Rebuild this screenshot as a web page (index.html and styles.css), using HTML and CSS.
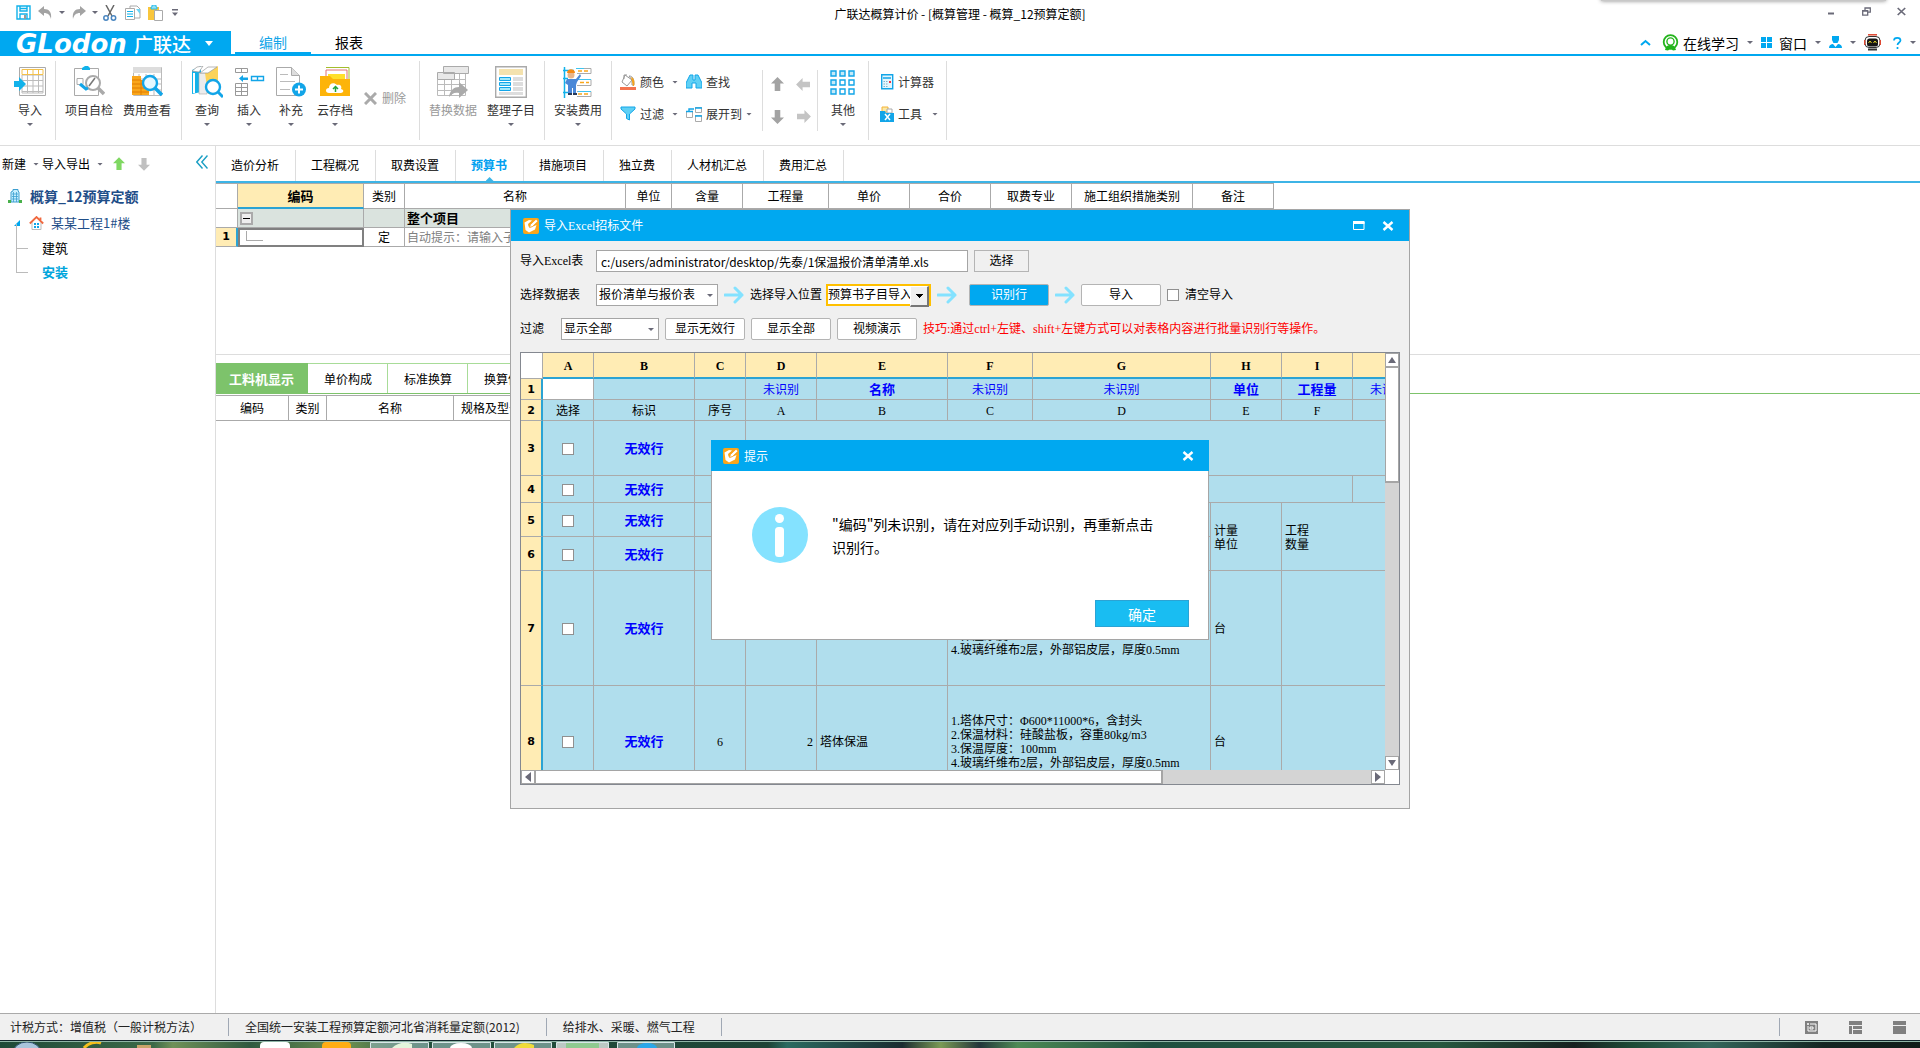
FILE: index.html
```html
<!DOCTYPE html>
<html lang="zh-CN">
<head>
<meta charset="utf-8">
<title>广联达概算计价 - [概算管理 - 概算_12预算定额]</title>
<link rel="stylesheet" href="styles.css">
</head>
<body>
<svg class="defs" aria-hidden="true">
  <symbol id="app" viewBox="0 0 16 16"><rect width="16" height="16" rx="2" fill="#faa61a"/><path d="M1.500 4.500L6 2l3 .5L5 6l.5 2.500 2 1L13.500 7 12 11.500 6 14.500 2.500 12z" fill="#fff"/><path d="M6.500 9.500l1-3L13 1.200 15 3.200 9.500 8.500z" fill="#fff" stroke="#f59a13" stroke-width=".7"/></symbol>
  <symbol id="step" viewBox="0 0 20 18"><path d="M1 9h17M11 2l7 7-7 7" fill="none" stroke="#84e2ff" stroke-width="3" stroke-linecap="round" stroke-linejoin="round"/></symbol>
  <symbol id="close" viewBox="0 0 12 10"><path d="M1.500 1l9 8M10.500 1l-9 8" stroke="#fff" stroke-width="2.400"/></symbol>
  <symbol id="arrow" viewBox="0 0 14 16"><path d="M7 0l7 7h-4v8H4V7H0z" fill="currentColor"/></symbol>
</svg>

<header class="titlebar">
  <div class="quick">
    <button aria-label="保存"><svg width="15" height="15" viewBox="0 0 15 15"><path d="M1 1h13v13H1zM4 1v5h7V1M4 14V9h7v5M4 3.500h7" fill="none" stroke="#12b2ea" stroke-width="1.400"/><path d="M8 10h2v4H8z" fill="#999"/></svg></button>
    <button class="q-undo" aria-label="撤销"><svg width="14" height="14" viewBox="0 0 14 14"><path d="M0 5l6-5v3c5 0 8 3 7 10-1-4-3-6-7-6v3z" fill="#a3a3a3"/></svg></button>
    <i class="dd"></i>
    <button class="q-redo" aria-label="恢复"><svg width="14" height="14" viewBox="0 0 14 14"><path d="M14 5L8 0v3C3 3 0 6 1 13c1-4 3-6 7-6v3z" fill="#a3a3a3"/></svg></button>
    <i class="dd"></i>
    <button class="q-cut" aria-label="剪切"><svg width="14" height="16" viewBox="0 0 14 16"><path d="M3 0l6 11M11 0L5 11" stroke="#666" stroke-width="1.500"/><circle cx="3" cy="13" r="2.200" fill="none" stroke="#4a86c0" stroke-width="1.500"/><circle cx="10.500" cy="13" r="2.200" fill="none" stroke="#4a86c0" stroke-width="1.500"/></svg></button>
    <button class="q-copy" aria-label="复制"><svg width="16" height="16" viewBox="0 0 16 16"><path d="M5 1h7l3 3v9H5z" fill="#fff" stroke="#aaa"/><path d="M11 4h4v5z" fill="#6fd3f3"/><path d="M.5 3.500h9v11h-9z" fill="#fff" stroke="#aaa"/><path d="M2 6.500h6M2 9h6M2 11.500h6" stroke="#12b2ea"/></svg></button>
    <button class="q-paste" aria-label="粘贴"><svg width="16" height="16" viewBox="0 0 16 16"><path d="M0 2h11v13H0z" fill="#f9c63c"/><path d="M3 4V2h1V0h4v2h1v2z" fill="#8fe0f5" stroke="#12b2ea" stroke-width=".8"/><path d="M6.500 5.500h8v10h-8z" fill="#fff" stroke="#aaa"/></svg></button>
    <i class="dd more"></i>
  </div>
  <h1>广联达概算计价 - [概算管理 - 概算_12预算定额]</h1>
  <div class="winbtns">
    <button aria-label="最小化"><svg width="9" height="9" viewBox="0 0 9 9"><path d="M1 6.500h6" stroke="#6a6a78" stroke-width="2"/></svg></button>
    <button aria-label="还原"><svg width="9" height="9" viewBox="0 0 9 9"><path d="M3 3V.8h5.300v4.400H6M.7 3.700h5v4.500h-5zM.5 4h5.500M3 1.200h5" fill="none" stroke="#6a6a78" stroke-width="1.300"/></svg></button>
    <button aria-label="关闭"><svg width="9" height="9" viewBox="0 0 9 9"><path d="M.7 1l7.500 7M8.200 1L.7 8" stroke="#6a6a78" stroke-width="1.700"/></svg></button>
  </div>
  <div class="dock"></div>
</header>

<nav class="menubar">
  <button class="brand"><span class="brand-en">GLodon</span><span class="brand-cn">广联达</span><i class="dd"></i></button>
  <a class="menu on" href="#edit">编制</a>
  <a class="menu" href="#report">报表</a>
  <div class="account">
    <svg width="11" height="7" viewBox="0 0 11 7"><path d="M1 6l4.500-4L10 6" fill="none" stroke="#00a8f0" stroke-width="2"/></svg>
    <button class="acct"><svg width="17" height="17" viewBox="0 0 17 17"><circle cx="8.500" cy="8" r="6.800" fill="none" stroke="#23b41b" stroke-width="1.800"/><circle cx="8.500" cy="7.500" r="3.600" fill="none" stroke="#23b41b" stroke-width="1.400"/><path d="M3 16c1-4 3-5 5.500-5s4.500 1 5.500 5l-3 .5-2.500-2-2.500 2z" fill="#23b41b"/></svg>在线学习</button><i class="dd"></i>
    <button class="acct acct-win"><svg width="11" height="11" viewBox="0 0 11 11"><path d="M0 0h5v5H0zM6 0h5v5H6zM0 6h5v5H0zM6 6h5v5H6z" fill="#00a8f0"/></svg>窗口</button><i class="dd"></i>
    <button class="acct" aria-label="用户"><svg width="13" height="13" viewBox="0 0 13 13"><path d="M3 0h7v4L8.500 7h-4L3 4zM0 12c0-3 2-4 4-4l2.500 3L9 8c2 0 4 1 4 4z" fill="#00a8f0"/></svg></button><i class="dd"></i>
    <button class="acct" aria-label="助手"><svg width="17" height="17" viewBox="0 0 17 17"><path d="M4 .8h9" stroke="#e0452e" stroke-width="1.500"/><rect x="1" y="2.500" width="15" height="11" rx="4" fill="#fff" stroke="#333"/><path d="M.7 6v5M16.300 6v5" stroke="#e0452e" stroke-width="1.300"/><rect x="3" y="4.500" width="11" height="8" rx="2.500" fill="#151515"/><path d="M4.500 9l1.500-2 1.500 2M9.500 9L11 7l1.500 2" fill="none" stroke="#e5d425"/><path d="M4 14.500h9v2H4z" fill="#333"/></svg></button>
    <button class="acct help" aria-label="帮助"><svg width="9" height="12" viewBox="0 0 9 12"><path d="M1 3.500C1 0 7.500 0 7.500 3.500 7.500 5.500 4.500 5.500 4.500 8M4.500 10v2" fill="none" stroke="#00a8f0" stroke-width="1.700"/></svg></button><i class="dd"></i>
  </div>
</nav>

<section class="ribbon" aria-label="功能区">
  <div class="group first">
    <button class="big"><svg width="32" height="32" viewBox="0 0 32 32"><path d="M5.500 1.500h26v28h-26z" fill="#fff" stroke="#aaa"/><path d="M8 9h21M8 14.500h21M8 20h21M8 25.500h21M13.500 9v18M19 9v18M24.500 9v18M8 9v18h21V9" fill="none" stroke="#bbb"/><path d="M8 3.500h21v5H8zM13.500 3.500v5M19 3.500v5M24.500 3.500v5" fill="none" stroke="#f3c04a"/><path d="M0 15h5v-4l7 7-7 7v-4H0z" fill="#12b2ea"/></svg>导入<i class="dd"></i></button>
  </div>
  <div class="group check">
    <button class="big"><svg width="32" height="32" viewBox="0 0 32 32"><path d="M1.500 2.500h24v27h-24z" fill="#fff" stroke="#aaa"/><path d="M9 4V2l3-2h3l2 2v2z" fill="#12b2ea"/><path d="M4 12.500h6v6H4z" fill="none" stroke="#aaa"/><circle cx="20" cy="17" r="7" fill="#fff" stroke="#aaa" stroke-width="2"/><path d="M25 22l6 6" stroke="#aaa" stroke-width="3.500"/><path d="M7 18l6 5 2-1" stroke="#12a5e8" stroke-width="3" fill="none"/><path d="M16 20l6-8" stroke="#777" stroke-width="1.500"/></svg>项目自检</button>
    <button class="big"><svg width="32" height="32" viewBox="0 0 32 32"><path d="M2.500 1.500h28v28h-28zM2 13h28M2 18h28M2 24h28M8 8v21M15 8v21M23 8v21" fill="none" stroke="#bbb"/><path d="M2 1h28v6H2z" fill="#ddd"/><path d="M1 10h9v4h8v15H1z" fill="#f9a61b"/><path d="M1 14h9M1 18h17M1 22h17M1 26h17M10 14v15" stroke="#e07c00"/><circle cx="19" cy="17" r="7" fill="#e5f8ff" stroke="#12a5e8" stroke-width="2.400"/><path d="M24 22l7 7" stroke="#12a5e8" stroke-width="3.500"/></svg>费用查看</button>
  </div>
  <div class="group">
    <button class="big sm"><svg width="32" height="32" viewBox="0 0 32 32"><path d="M1 4l9-4v26l-9 2z" fill="#12b2ea"/><path d="M3 7v20" stroke="#fff" stroke-width="2"/><path d="M1 5l5-4 6-1-4 6z" fill="#fff" stroke="#999" stroke-width=".7"/><path d="M8 7h8v21H8z" fill="#ececec" stroke="#aaa" stroke-width=".6"/><path d="M14 7L27 0v25l-10 3z" fill="#fbd35a"/><path d="M9 7l8-6h9l-9 6z" fill="#fff" stroke="#999" stroke-width=".7"/><circle cx="22" cy="21" r="7" fill="#fff" stroke="#12a5e8" stroke-width="2.400"/><path d="M27 26l5 5" stroke="#12a5e8" stroke-width="3"/></svg>查询<i class="dd"></i></button>
    <button class="big sm"><svg width="32" height="32" viewBox="0 0 32 32"><path d="M2.500 2.500h12v4h-12zM8.500 2v5M2.500 17.500h12v12h-12zM2 21.500h13M2 25.500h13M8.500 17v13" fill="none" stroke="#999"/><path d="M18.500 10.500h12v4h-12zM24.500 10v5" fill="none" stroke="#12a5e8" stroke-width="1.400"/><path d="M6 12.500L10 9v2.500h5v2.500h-5v2z" fill="#12a5e8"/></svg>插入<i class="dd"></i></button>
    <button class="big sm"><svg width="32" height="32" viewBox="0 0 32 32"><path d="M1.500 1.500h15l8 8v20h-23z" fill="#fff" stroke="#aaa"/><path d="M16.500 1.500v8h8" fill="#ddd" stroke="#aaa"/><path d="M5 8.500h8M5 15.500h15M5 23.500h10" stroke="#bbb"/><circle cx="24" cy="23.500" r="7" fill="#12a5e8"/><path d="M20 23.500h8M24 19.500v8" stroke="#fff" stroke-width="2"/></svg>补充<i class="dd"></i></button>
    <button class="big sm wide"><svg width="32" height="32" viewBox="0 0 32 32"><path d="M7 1.500h23V14" fill="#fff" stroke="#a3bd2c"/><path d="M7 4h21v10H7z" fill="#fff" stroke="#e07070"/><path d="M9 8h17v6H9z" fill="#ffe02a"/><path d="M1 10h10l3 3h17v17H1z" fill="#fdb40a"/><path d="M10 27c-4 0-4-5 0-5 0-5 5-6 8-3 4-1 5 2 4 4 4 1 2 4 0 4z" fill="#fff"/><path d="M16.500 26v-5M14 23l2.500-2.500L19 23" fill="none" stroke="#25a53a" stroke-width="1.500"/></svg>云存档<i class="dd"></i></button>
    <button class="small del" disabled><svg width="13" height="13" viewBox="0 0 13 13"><path d="M1 1l11 11M12 1L1 12" stroke="#aaa" stroke-width="3"/></svg>删除</button>
  </div>
  <div class="group">
    <button class="big" disabled><svg width="32" height="32" viewBox="0 0 32 32"><path d="M0.500 13.500h28v16h-28zM0 18.500h28M0 24.500h28M7.500 13v17M14.500 13v17M22.500 8v22M28.500 8v10" fill="none" stroke="#bbb"/><path d="M6.500.5h25v7h-25zM.5 6.500h17v7H.5z" fill="#e8e8e8" stroke="#aaa"/><path d="M12 31c1-7 5-10 10-10v-5l9 8-9 8v-5c-5-1-7 1-10 4z" fill="#aaa"/></svg>替换数据</button>
    <button class="big"><svg width="32" height="32" viewBox="0 0 32 32"><path d="M.7.700h30.600v30.600H.7z" fill="#fff" stroke="#aaa" stroke-width="1.400"/><path d="M4 3h24v6H4z" fill="#f4e2ae"/><path d="M18 11h10v4H18zM18 16h10v4H18zM18 21h10v4H18zM4 26h24v3H4z" fill="#ddd"/><path d="M4.500 11.500h11v3h-11zM4.500 16.500h11v3h-11zM4.500 21.500h11v3h-11z" fill="#9fe8fb" stroke="#12a5e8"/></svg>整理子目<i class="dd"></i></button>
  </div>
  <div class="group">
    <button class="big"><svg width="32" height="32" viewBox="0 0 32 32"><path d="M2.500 1v31M1 4.500h11M1 26.500h9M1 12.500h5" stroke="#12b2ea" stroke-width="1.500"/><path d="M15 2.500h14v5H15M15 13.500h14v6H15M15 25.500h14v5H15" fill="none" stroke="#aaa"/><path d="M16 5h4M22 5h4M18 16.500h4M24 16.500h3M16 28h4M22 28h4" stroke="#f9a61b" stroke-width="1.500"/><path d="M14 2.500h8M16 13.500h13M16 25.500h13" stroke="#3fc4ee"/><circle cx="9" cy="9" r="3.500" fill="#e8b58a"/><path d="M5 7c0-5 8-5 8 0z" fill="#f58a16"/><path d="M5 13h9l4-5 1 2-4 6-1 3v10h-3v-7h-1v7H6V19l-3-2z" fill="#4a88d8"/><path d="M6 28h4M11 28h4" stroke="#273a5a" stroke-width="2"/></svg>安装费用<i class="dd"></i></button>
  </div>
  <div class="group tools">
    <button class="small"><svg width="16" height="16" viewBox="0 0 16 16"><path d="M5 1l7 5-5 6-5-4z" fill="#fff" stroke="#999"/><path d="M4 5V1h3M9 2c4 0 5 3 5 9h-2V6z" fill="none" stroke="#999"/><path d="M11 3c3 1 4 4 3 9h-1z" fill="#f4a21b"/><path d="M0 13h16v3H0z" fill="#f4744f"/></svg>颜色</button><i class="dd"></i>
    <button class="small"><svg width="16" height="16" viewBox="0 0 16 16"><path d="M4 1h3v5h2V1h3l4 8v5h-6V9H6v5H0V9z" fill="#5fd0f5" stroke="#12a5e8"/></svg>查找</button><i></i>
    <button class="small"><svg width="16" height="16" viewBox="0 0 16 16"><path d="M1 1h14v2L9.500 8v6l-3-1.500V8L1 3z" fill="#5fd0f5" stroke="#12a5e8"/></svg>过滤</button><i class="dd"></i>
    <button class="small"><svg width="16" height="16" viewBox="0 0 16 16"><path d="M.5 5.500h6v6h-6zM9.500 1.500h6v5h-6zM9.500 9.500h6v6h-6z" fill="#fff" stroke="#aaa"/><path d="M0 5.500h7M9 2h7M9 10h7M3 5V3h5" stroke="#12a5e8" stroke-width="1.400" fill="none"/></svg>展开到</button><i class="dd"></i>
  </div>
  <div class="group short moves">
    <button aria-label="上移"><svg class="up"><use href="#arrow"/></svg></button>
    <button aria-label="升级"><svg class="left pale"><use href="#arrow"/></svg></button>
    <button aria-label="下移"><svg class="down"><use href="#arrow"/></svg></button>
    <button aria-label="降级"><svg class="right pale"><use href="#arrow"/></svg></button>
  </div>
  <div class="group other">
    <button class="big"><svg width="32" height="32" viewBox="0 0 32 32"><g fill="#fff" stroke="#12a5e8" stroke-width="1.400"><path d="M4 5h5v5H4zM13 5h5v5h-5zM22 5h5v5h-5zM4 14h5v5H4z" fill="#c5e9f7"/><path d="M13 14h5v5h-5zM22 14h5v5h-5zM13 23h5v5h-5zM22 23h5v5h-5z"/><path d="M4 23h5v5H4z" fill="#c5e9f7"/></g></svg>其他<i class="dd"></i></button>
  </div>
  <div class="group tools calc">
    <button class="small"><svg width="14" height="16" viewBox="0 0 14 16"><path d="M1.700.7h11v14h-11z" fill="#e4f6fd" stroke="#12a5e8" stroke-width="1.400"/><path d="M3 4h8" stroke="#12a5e8" stroke-width="1.500"/><path d="M3.500 7.500h5M3.500 10h5M3.500 12.500h5" stroke="#7db6d0" stroke-dasharray="1.500 1"/><path d="M9 8h2" stroke="#e34" stroke-width="2"/></svg>计算器</button><i></i>
    <button class="small"><svg width="14" height="16" viewBox="0 0 14 16"><path d="M2 1h6v5H2z" fill="#fde9a2" stroke="#f4b43b"/><path d="M7 3h5v4H7z" fill="#fff" stroke="#aaa"/><path d="M0 5h5l1 2h8v9H0z" fill="#12a5e8"/><path d="M5 8l5 6M10 8l-5 6" stroke="#fff" stroke-width="1.500"/></svg>工具</button><i class="dd"></i>
  </div>
</section>

<main class="work">
  <aside class="side">
    <div class="side-tools">
      <button>新建</button><i class="dd"></i>
      <button>导入导出</button><i class="dd"></i>
      <button class="go-up" aria-label="上移"><svg width="12" height="14"><use href="#arrow"/></svg></button>
      <button class="go-down" aria-label="下移"><svg class="down" width="12" height="14"><use href="#arrow"/></svg></button>
      <button class="fold" aria-label="收起"><svg width="12" height="14" viewBox="0 0 12 14"><path d="M6.500.5L.8 7l5.700 6.500M11.500.5L5.800 7l5.700 6.500" fill="none" stroke="#1b9fc4" stroke-width="1.400"/></svg></button>
    </div>
    <ul class="tree">
      <li class="t-root"><svg width="14" height="14" viewBox="0 0 14 14"><path d="M3 13V3l2-1V.5h5V2l1 1v10z" fill="#c6efff" stroke="#3d9fd0"/><path d="M4 5h6M4 7.500h6M4 10h6M5.500 3v10M8.500 3v10" stroke="#3d9fd0" stroke-width=".8"/><path d="M0 11h3v3H0zM11 11h3v3h-3z" fill="#48b04a"/></svg>概算_12预算定额</li>
      <li class="t-proj"><svg width="6" height="6" viewBox="0 0 6 6"><path d="M6 0v6H0z" fill="#00a8f0"/></svg><svg width="15" height="14" viewBox="0 0 15 14"><path d="M3 6v7.500h9V6" fill="#fff" stroke="#bbb"/><path d="M.8 7.500L7.500 1l6.700 6.500M11.500 4V1.500" fill="none" stroke="#f0693f" stroke-width="1.800"/><path d="M5 7h2v2H5zM8 7h2v2H8zM5 10h2v2H5zM8 10h2v2H8z" fill="#12a5e8"/></svg>某某工程1#楼</li>
      <li class="t-leaf">建筑</li>
      <li class="t-leaf on">安装</li>
    </ul>
  </aside>

  <section class="pane">
    <nav class="tabs">
      <a href="#t1">造价分析</a><a href="#t2">工程概况</a><a href="#t3">取费设置</a><a href="#t4" class="on">预算书</a><a href="#t5">措施项目</a><a href="#t6">独立费</a><a href="#t7">人材机汇总</a><a href="#t8">费用汇总</a>
    </nav>
    <div class="upper">
      <table class="book">
        <colgroup><col class="w22"><col class="w126"><col class="w41"><col class="w221"><col class="w46"><col class="w71"><col class="w86"><col class="w81"><col class="w81"><col class="w81"><col class="w121"><col class="w81"></colgroup>
        <tr class="head"><th></th><th class="sel">编码</th><th>类别</th><th>名称</th><th>单位</th><th>含量</th><th>工程量</th><th>单价</th><th>合价</th><th>取费专业</th><th>施工组织措施类别</th><th>备注</th></tr>
        <tr class="total"><th></th><td><span class="minus"></span></td><td></td><td class="b">整个项目</td><td></td><td></td><td></td><td></td><td></td><td></td><td></td><td></td></tr>
        <tr><th class="num">1</th><td class="cursor"><span class="branch"></span></td><td class="c">定</td><td class="hint">自动提示：请输入子目</td><td></td><td></td><td></td><td></td><td></td><td></td><td></td><td></td></tr>
      </table>
    </div>
    <div class="lower">
      <nav class="subtabs"><a href="#s1" class="on">工料机显示</a><a href="#s2">单价构成</a><a href="#s3">标准换算</a><a href="#s4">换算信息</a></nav>
      <table class="book parts">
        <colgroup><col class="w73"><col class="w38"><col class="w127"><col class="w75"></colgroup>
        <tr class="head"><th>编码</th><th>类别</th><th>名称</th><th>规格及型号</th></tr>
      </table>
    </div>
  </section>
</main>

<footer class="status">
  <span>计税方式：增值税（一般计税方法）</span>
  <span>全国统一安装工程预算定额河北省消耗量定额(2012)</span>
  <span>给排水、采暖、燃气工程</span>
  <div class="views">
    <button aria-label="视图一"><svg width="13" height="13" viewBox="0 0 13 13"><path d="M0 0h13v13H0z" fill="#808080"/><path d="M2 3h2M3 2v2M5 3h6v7H3V5M5 6h3v2H5z" fill="none" stroke="#fff"/></svg></button>
    <button aria-label="视图二"><svg width="13" height="13" viewBox="0 0 13 13"><path d="M0 0h13v4H0zM0 5h3v8H0zM4 5h9v3H4zM4 9h9v4H4z" fill="#808080"/></svg></button>
    <button aria-label="视图三"><svg width="13" height="13" viewBox="0 0 13 13"><path d="M0 0h13v4H0zM0 5h13v8H0z" fill="#808080"/></svg></button>
  </div>
</footer>
<div class="taskbar">
  <svg width="700" height="6" viewBox="0 0 700 6"><ellipse cx="27" cy="11" rx="14" ry="11" fill="#a9c6dc" stroke="#31556f"/><path d="M84 6c4-5 12-7 17-5" stroke="#f4c01c" stroke-width="3" fill="none"/><path d="M137 3h14v3h-14z" fill="#caa46a"/><rect x="260" width="30" height="10" rx="4" fill="#fff"/><rect x="322" width="29" height="10" rx="4" fill="#ffad14"/><g stroke="#d9e6e8" fill="#8fb0ad" fill-opacity=".7"><path d="M370.500 6V.5h58V6M432.500 6V.5h58V6M494.500 6V.5h57V6M617.500 6V.5h57V6"/><path d="M556.500 6V.5h52V6" fill="#fff"/></g><path d="M392 6c6-6 14-6 20-4v4z" fill="#e4f5dc"/><ellipse cx="461" cy="6" rx="11" ry="5" fill="#fff"/><path d="M514 6c5-6 13-6 20-3v3z" fill="#f0dc3a"/><path d="M566 1h33v5h-33z" fill="#8fca90"/><ellipse cx="647" cy="6" rx="10" ry="5" fill="#2aa7e8"/></svg>
</div>

<section class="window import" role="dialog" aria-label="导入Excel招标文件">
  <header class="wbar"><svg width="16" height="16"><use href="#app"/></svg><h2>导入Excel招标文件</h2>
    <button aria-label="最大化"><svg width="12" height="10" viewBox="0 0 12 10"><path d="M.5 1.500h10.500v7H.5zM0 1.500h11.500" fill="none" stroke="#fff"/><path d="M0 0h11.500v3H0z" fill="#fff"/></svg></button>
    <button aria-label="关闭"><svg width="12" height="10"><use href="#close"/></svg></button>
  </header>
  <div class="form">
    <div class="line">
      <label class="lab" for="file">导入Excel表</label>
      <input id="file" type="text" value="c:/users/administrator/desktop/先泰/1保温报价清单清单.xls">
      <button class="btn square">选择</button>
    </div>
    <div class="line">
      <label class="lab" for="sheet">选择数据表</label>
      <span class="select sheet"><select id="sheet"><option>报价清单与报价表</option></select></span>
      <svg class="step" width="20" height="18"><use href="#step"/></svg>
      <label class="lab" for="target">选择导入位置</label>
      <span class="select target"><select id="target"><option>预算书子目导入</option></select></span>
      <svg class="step" width="20" height="18"><use href="#step"/></svg>
      <button class="btn primary">识别行</button>
      <svg class="step" width="20" height="18"><use href="#step"/></svg>
      <button class="btn">导入</button>
      <label class="tick"><input type="checkbox">清空导入</label>
    </div>
    <div class="line">
      <label class="lab short-lab" for="filter">过滤</label>
      <span class="select filter"><select id="filter"><option>显示全部</option></select></span>
      <button class="btn">显示无效行</button>
      <button class="btn">显示全部</button>
      <button class="btn">视频演示</button>
      <span class="tip">技巧:通过ctrl+左键、shift+左键方式可以对表格内容进行批量识别行等操作。</span>
    </div>
  </div>
  <div class="gridbox">
    <div class="view">
      <table class="sheet-grid">
        <colgroup><col class="w22"><col class="w51"><col class="w101"><col class="w51"><col class="w71"><col class="w131"><col class="w85"><col class="w178"><col class="w71"><col class="w71"><col class="w71"></colgroup>
        <tr class="cols"><td></td><th>A</th><th>B</th><th>C</th><th>D</th><th>E</th><th>F</th><th>G</th><th>H</th><th>I</th><th></th></tr>
        <tr class="h21 map"><th>1</th><td class="blank"></td><td></td><td></td><td>未识别</td><td class="b">名称</td><td>未识别</td><td>未识别</td><td class="b">单位</td><td class="b">工程量</td><td>未识别</td></tr>
        <tr class="h21"><th>2</th><td>选择</td><td>标识</td><td>序号</td><td>A</td><td>B</td><td>C</td><td>D</td><td>E</td><td>F</td><td></td></tr>
        <tr class="h55"><th>3</th><td><input type="checkbox" aria-label="第3行"></td><td class="bad">无效行</td><td></td><td colspan="7"></td></tr>
        <tr class="h27"><th>4</th><td><input type="checkbox" aria-label="第4行"></td><td class="bad">无效行</td><td></td><td colspan="6"></td><td></td></tr>
        <tr class="h34"><th>5</th><td><input type="checkbox" aria-label="第5行"></td><td class="bad">无效行</td><td></td><td></td><td></td><td colspan="2"></td><td class="l" rowspan="2">计量<br>单位</td><td class="l" rowspan="2" colspan="2">工程<br>数量</td></tr>
        <tr class="h34"><th>6</th><td><input type="checkbox" aria-label="第6行"></td><td class="bad">无效行</td><td></td><td></td><td></td><td colspan="2"></td></tr>
        <tr class="h115"><th>7</th><td><input type="checkbox" aria-label="第7行"></td><td class="bad">无效行</td><td></td><td></td><td></td><td class="l spec" colspan="2"><br><br>3.保温厚度：100mm<br>4.玻璃纤维布2层，外部铝皮层，厚度0.5mm</td><td class="l">台</td><td colspan="2"></td></tr>
        <tr class="h111"><th>8</th><td><input type="checkbox" aria-label="第8行"></td><td class="bad">无效行</td><td>6</td><td class="r">2</td><td class="l">塔体保温</td><td class="l spec" colspan="2">1.塔体尺寸：Φ600*11000*6，含封头<br>2.保温材料：硅酸盐板，容重80kg/m3<br>3.保温厚度：100mm<br>4.玻璃纤维布2层，外部铝皮层，厚度0.5mm</td><td class="l">台</td><td colspan="2"></td></tr>
      </table>
    </div>
    <div class="vbar"><i class="knob tri-up"></i><i class="vthumb"></i><i class="knob tri-down"></i></div>
    <div class="hbar"><i class="knob tri-left"></i><i class="hthumb"></i><i class="knob tri-right"></i></div>
  </div>
</section>

<section class="window prompt" role="alertdialog" aria-label="提示">
  <header class="wbar"><svg width="16" height="16"><use href="#app"/></svg><h2>提示</h2><button aria-label="关闭"><svg width="12" height="10"><use href="#close"/></svg></button></header>
  <div class="msg">
    <svg width="56" height="56" viewBox="0 0 56 56"><circle cx="28" cy="28" r="28" fill="#84e2ff"/><circle cx="27.500" cy="11.500" r="4.500" fill="#fff"/><rect x="23" y="20" width="9" height="30" rx="3.500" fill="#fff"/></svg>
    <p>"编码"列未识别，请在对应列手动识别，再重新点击识别行。</p>
  </div>
  <div class="actions"><button>确定</button></div>
</section>
</body>
</html>
```
FILE: styles.css
```css
* { box-sizing: border-box; }
html { background: #fff; }
body {
  margin: 0;
  position: relative;
  height: 100vh;
  display: flex;
  flex-direction: column;
  overflow: hidden;
  color: #000;
  font: 12px/16px "Noto Sans CJK SC", sans-serif;
}
button, input, select { font: inherit; color: inherit; margin: 0; }
button { border: 0; padding: 0; background: none; white-space: nowrap; }
h1, h2, p, ul { margin: 0; padding: 0; }
h1, h2 { font-size: 12px; font-weight: 400; }
a { color: inherit; text-decoration: none; }
svg { display: block; flex: none; }
ul { list-style: none; }
.defs { position: absolute; width: 0; height: 0; }
.dd {
  flex: none;
  width: 6px;
  height: 3px;
  background: #6a6a78;
  clip-path: polygon(0 0, 100% 0, 50% 100%);
}
.down { transform: rotate(180deg); }
.left { transform: rotate(-90deg); }
.right { transform: rotate(90deg); }

/* title bar */
.titlebar {
  position: relative;
  flex: none;
  height: 31px;
  display: grid;
  grid-template-columns: 1fr auto 1fr;
  align-items: center;
}
.titlebar h1 { margin-bottom: 3px; }
.quick { display: flex; align-items: center; padding-left: 16px; margin-bottom: 6px; }
.q-undo { margin: 0 7px; }
.q-redo { margin: 0 6px 0 7px; }
.q-cut { margin-left: 5px; }
.q-copy { margin-left: 8px; }
.q-paste { margin: 0 8px 0 7px; }
.quick .more { height: 7px; clip-path: polygon(0 0, 100% 0, 100% 20%, 0 20%, 0 50%, 100% 50%, 50% 100%, 0 50%); }
.winbtns { display: flex; justify-content: flex-end; gap: 26px; padding-right: 14px; margin-bottom: 9px; }
.dock {
  position: absolute;
  top: -10px;
  right: 34px;
  width: 285px;
  height: 11px;
  background: #c8c8c8;
  box-shadow: 0 0 4px #888;
}

/* menu row */
.menubar { flex: none; display: flex; height: 25px; border-bottom: 2px solid #00a8f0; }
.brand {
  width: 231px;
  height: 25px;
  padding-left: 16px;
  background: #00a8f0;
  color: #fff;
  display: flex;
  align-items: center;
}
.brand-en { font: italic bold 26px/24px "DejaVu Sans", sans-serif; width: 118px; text-align: left; }
.brand-cn { font-size: 19px; line-height: 22px; font-weight: 500; }
.brand .dd { width: 8px; height: 5px; background: #fff; margin-left: 14px; }
.menu { width: 76px; margin-left: 4px; height: 25px; line-height: 22px; font-size: 14px; text-align: center; }
.menu + .menu { margin-left: 0; }
.menu.on { color: #12a5e8; border-bottom: 4px solid #00a8f0; }
.account { margin-left: auto; display: flex; align-items: center; gap: 8px; padding-right: 4px; font-size: 14px; }
.acct { display: flex; align-items: center; gap: 4px; }
.account > svg { margin-right: 3px; }
.acct-win { gap: 7px; }
.help { margin-left: 4px; }

/* ribbon */
.ribbon { flex: none; display: flex; height: 90px; padding-top: 5px; border-bottom: 1px solid #ddd; color: #333; }
.group { display: flex; align-items: flex-start; height: 79px; padding: 5px 4px 0; border-right: 1px solid #ddd; }
.group.first { padding: 5px 0 0 5px; }
.group.first .big { width: 50px; }
.group.check { padding-right: 5px; }
.big { width: 58px; display: flex; flex-direction: column; align-items: center; }
.big > svg { margin-bottom: 4px; }
.big .dd { margin-top: 5px; }
.big.sm { width: 42px; }
.big.wide { width: 46px; }
.small { display: flex; align-items: center; gap: 5px; }
button:disabled { color: #999; }
.del { margin: 24px 9px 0 6px; }
.tools {
  display: grid;
  grid-template-columns: 52px 14px 60px 8px;
  grid-auto-rows: 32px;
  align-items: center;
  align-content: start;
  padding: 5px 8px 0;
}
.tools .small { gap: 4px; }
.calc { grid-template-columns: 52px 8px; padding: 5px 6px 0 11px; }
.moves { display: grid; grid-template-columns: 26px 26px; grid-auto-rows: 32px; align-items: center; justify-items: center; height: 61px; margin-top: 9px; padding: 0 1px; color: #a3a3a3; align-content: center; }
.group:has(+ .short) { border-right: 0; }
.short { border-left: 1px solid #ddd; }
.moves svg { width: 13px; height: 15px; }
.pale { color: #c4c4c4; }
.other { padding: 5px 0 0; }
.other .big { width: 50px; }

/* workspace */
.work { flex: 1; min-height: 0; display: flex; }
.side { flex: none; width: 216px; border-right: 1px solid #ddd; }
.side-tools { display: flex; align-items: center; height: 36px; padding-left: 2px; }
.side-tools .dd { margin: 0 3px 0 7px; }
.side-tools .go-up { color: #7fd862; margin-left: 7px; }
.side-tools .go-down { color: #c0c0c0; margin-left: 13px; }
.fold { margin: 0 7px 5px auto; }
.tree { color: #1f4e88; font-size: 13px; }
.tree li { display: flex; align-items: center; height: 24px; }
.tree .t-root { font-size: 14px; font-weight: 700; padding-left: 8px; gap: 8px; height: 28px; }
.tree .t-proj { height: 26px; padding-left: 14px; gap: 9px; }
.tree .t-proj svg + svg { margin-right: -2px; }
.tree .t-leaf { color: #000; position: relative; padding-left: 42px; }
.tree .t-leaf::before {
  content: "";
  position: absolute;
  left: 16px;
  top: -12px;
  width: 11px;
  height: 24px;
  border: solid #bbb;
  border-width: 0 0 1px 1px;
}
.tree .t-leaf.on { color: #00a5dc; font-weight: 700; }
.pane { flex: 1; min-width: 0; display: flex; flex-direction: column; }
.tabs { display: flex; height: 37px; padding-top: 4px; border-bottom: 2px solid #3db4e6; }
.tabs a { position: relative; padding: 0 16px 0 15px; line-height: 30px; border-right: 1px solid #ddd; }
.tabs .on { color: #00a0f0; font-weight: 700; }
.tabs .on::after {
  content: "";
  position: absolute;
  left: 50%;
  bottom: 0;
  width: 8px;
  height: 4px;
  margin-left: -4px;
  background: #3db4e6;
  clip-path: polygon(50% 0, 100% 100%, 0 100%);
}
.upper { height: 171px; }
.lower { flex: 1; border-top: 1px solid #ddd; padding-top: 8px; }

table { table-layout: fixed; border-collapse: separate; border-spacing: 0; width: 0; }
td, th { padding: 0; overflow: hidden; white-space: nowrap; }
.book td, .book th { height: 19px; line-height: 16px; border: solid #aaa; border-width: 0 1px 1px 0; font-weight: 400; }
.book .head th { height: 26px; border-top-width: 1px; }
.book .head .sel { background: #ffecb4; font-weight: 700; border-bottom: 2px solid #2ba3d4; font-size: 13px; }
.book .total td { background: #dae3de; }
.book .num { background: #ffecb4; font: 700 11px/16px "DejaVu Sans", sans-serif; border-right: 2px solid #2ba3d4; }
.book .b { font-weight: 700; font-size: 13px; padding-left: 2px; }
.book .c { text-align: center; }
.book .hint { color: #808080; padding-left: 2px; }
.book .cursor { border: 2px solid #808080; }
.minus { display: block; width: 13px; height: 13px; margin-left: 2px; border: 2px solid #aaa; background: linear-gradient(#000, #000) 50% 50% / 7px 1px no-repeat #eee; }
.branch { display: block; width: 17px; height: 10px; margin: -4px 0 0 6px; border: solid #aaa; border-width: 0 0 1px 1px; }
.w22 { width: 22px; } .w38 { width: 38px; } .w41 { width: 41px; } .w46 { width: 46px; } .w51 { width: 51px; }
.w71 { width: 71px; } .w73 { width: 73px; } .w75 { width: 75px; } .w81 { width: 81px; } .w85 { width: 85px; }
.w86 { width: 86px; } .w101 { width: 101px; } .w121 { width: 121px; } .w126 { width: 126px; } .w127 { width: 127px; }
.w131 { width: 131px; } .w178 { width: 178px; } .w221 { width: 221px; }
.subtabs { display: flex; height: 31px; border-bottom: 1px solid #7dc36b; }
.subtabs a { padding: 0 15px 0 16px; line-height: 29px; border: solid #a8dc98; border-width: 1px 1px 0 0; }
.subtabs .on { background: #7dc36b; color: #fff; font-weight: 700; font-size: 13px; border-color: #7dc36b; padding: 0 13px; }
.parts { margin-top: 1px; }

/* status bar and desktop strip */
.status { flex: none; display: flex; align-items: center; height: 27px; background: #f0f0f0; border-top: 1px solid #aaa; color: #222; }
.status span { height: 18px; line-height: 17px; padding: 0 26px 0 16px; border-right: 1px solid #a0a8b4; }
.status span:first-child { padding: 0 26px 0 10px; }
.views { margin-left: auto; display: flex; align-items: center; gap: 31px; height: 18px; padding: 0 14px 0 25px; border-left: 1px solid #a0a8b4; }
.taskbar {
  flex: none;
  height: 8px;
  border-top: 1px solid #14262c;
  box-shadow: inset 0 1px #8fb5a6;
  padding-top: 1px;
  overflow: hidden;
  background: linear-gradient(90deg, #1f4a38, #3c6a48 8%, #6f9158 9%, #2f5a40 13%, #6e9152 18%, #23503c 22%, #1d4436 40%, #2a6a60 41%, #1a2c30 47%, #7a9a55 49%, #22363a 51%, #4d8a55 53%, #1f4f3f 60%, #27583f 75%, #16201f 82%, #1d4a36 85%, #34685c 89%, #142522 95%, #101c18);
}

/* floating windows */
.window { position: absolute; display: flex; flex-direction: column; border: 1px solid #a5a5a5; }
.import { left: 510px; top: 209px; width: 900px; height: 600px; background: #f0f0f0; font-family: "Liberation Serif", "Noto Sans CJK SC", serif; }
.wbar { flex: none; display: flex; align-items: center; height: 31px; padding: 0 15px 0 12px; gap: 5px; background: #00a8f0; color: #fff; }
.wbar h2 { flex: 1; }
.wbar button + button { margin-left: 12px; }
.form { display: flex; flex-direction: column; gap: 12px; padding: 9px 9px 12px; }
.line { display: flex; align-items: center; height: 22px; gap: 6px; white-space: nowrap; }
.lab { flex: none; width: 70px; }
.short-lab { width: 35px; }
.line input[type="text"] { width: 372px; height: 22px; padding: 0 4px; border: 1px solid #a5a5a5; background: #fff; font-family: "Noto Sans CJK SC", sans-serif; }
.btn { width: 80px; height: 22px; background: #fff; border: 1px solid #b4b4b4; border-radius: 2px; line-height: 20px; }
.square { width: 55px; background: #f0f0f0; border-radius: 0; }
.primary { background: #00a8f0; color: #fff; margin-left: 6px; }
.select { position: relative; height: 22px; }
.select select { width: 100%; height: 100%; appearance: none; padding: 0 2px; border: 1px solid #a5a5a5; border-radius: 0; background: #fff; }
.select::after { content: ""; position: absolute; right: 5px; top: 10px; width: 6px; height: 3px; background: #6a6a78; clip-path: polygon(0 0, 100% 0, 50% 100%); }
.sheet { width: 122px; }
.filter { width: 98px; }
.target { width: 105px; }
.target select { border: 2px solid #ffc000; padding: 0; }
.target::after {
  right: 2px; top: 2px; width: 16px; height: 18px; clip-path: none;
  border: solid; border-width: 1px 2px 2px 1px; border-color: #fff #777 #777 #fff;
  background: conic-gradient(from 315deg at 50% 100%, #000 90deg, transparent 0) 50% 50% / 7px 4px no-repeat #f0f0f0;
}
input[type="checkbox"] { appearance: none; display: block; flex: none; width: 12px; height: 12px; border: 1px solid #909090; background: #fff; }
.tick { display: flex; align-items: center; gap: 6px; }
.tip { color: #f00; }
.gridbox {
  margin: 0 9px;
  width: 880px;
  height: 433px;
  border: 1px solid #848890;
  display: grid;
  grid-template-columns: 1fr 14px;
  grid-template-rows: 1fr 14px;
  background: #fff;
}
.view { overflow: hidden; height: 417px; min-width: 0; }
.sheet-grid td, .sheet-grid th { background: #b0deed; border: solid #aaa; border-width: 0 1px 1px 0; text-align: center; line-height: 14px; padding-top: 2px; }
.sheet-grid th { background: #ffecb4; border-right: 2px solid #2ba3d4; font: 700 11px/14px "DejaVu Sans", sans-serif; }
.sheet-grid .cols td { background: #fff; height: 26px; }
.sheet-grid .cols th { font: 700 12px/14px "Liberation Serif", serif; border-right: 1px solid #aaa; border-bottom: 2px solid #2ba3d4; }
.sheet-grid .blank { background: #fff; }
.map td { color: #00f; }
.sheet-grid .b, .sheet-grid .bad { color: #00f; font-weight: 700; font-size: 13px; }
.sheet-grid .l { text-align: left; padding-left: 3px; }
.sheet-grid .r { text-align: right; padding-right: 3px; }
.sheet-grid input { margin: 0 auto; }
.h21 { height: 21px; } .h27 { height: 27px; } .h34 { height: 34px; } .h55 { height: 55px; } .h111 { height: 111px; } .h115 { height: 115px; }
.vbar { display: flex; flex-direction: column; background: #d4d4d4; }
.hbar { display: flex; background: #d4d4d4; }
.knob { flex: none; position: relative; width: 14px; height: 14px; background: #fff; border: 1px solid #a5a5a5; }
.knob::after { content: ""; position: absolute; inset: 3px 2px; background: #6a6a78; }
.tri-up::after { clip-path: polygon(50% 0, 100% 100%, 0 100%); }
.tri-down::after { clip-path: polygon(0 0, 100% 0, 50% 100%); }
.tri-left::after { inset: 1px 3px; clip-path: polygon(100% 0, 100% 100%, 0 50%); }
.tri-right::after { inset: 1px 3px; clip-path: polygon(0 0, 100% 50%, 0 100%); }
.vthumb { height: 116px; background: #fff; border: solid #a5a5a5; border-width: 1px 1px 2px; }
.tri-down { margin-top: auto; }
.tri-right { margin-left: auto; }
.hthumb { width: 628px; background: #fff; border: solid #a5a5a5; border-width: 1px 2px 1px 1px; }

.prompt { left: 711px; top: 440px; width: 498px; height: 200px; background: #fff; font-size: 14px; border-top: 0; }
.prompt .wbar { margin: 0 -1px; padding-right: 15px; }
.msg { display: flex; gap: 24px; padding: 36px 50px 0 40px; }
.msg p { padding-top: 6px; line-height: 23px; }
.actions { margin: auto 19px 12px auto; }
.actions button { width: 94px; height: 27px; border: 1px solid #2ba3d4; background: #19bdf2; color: #fff; }
```
